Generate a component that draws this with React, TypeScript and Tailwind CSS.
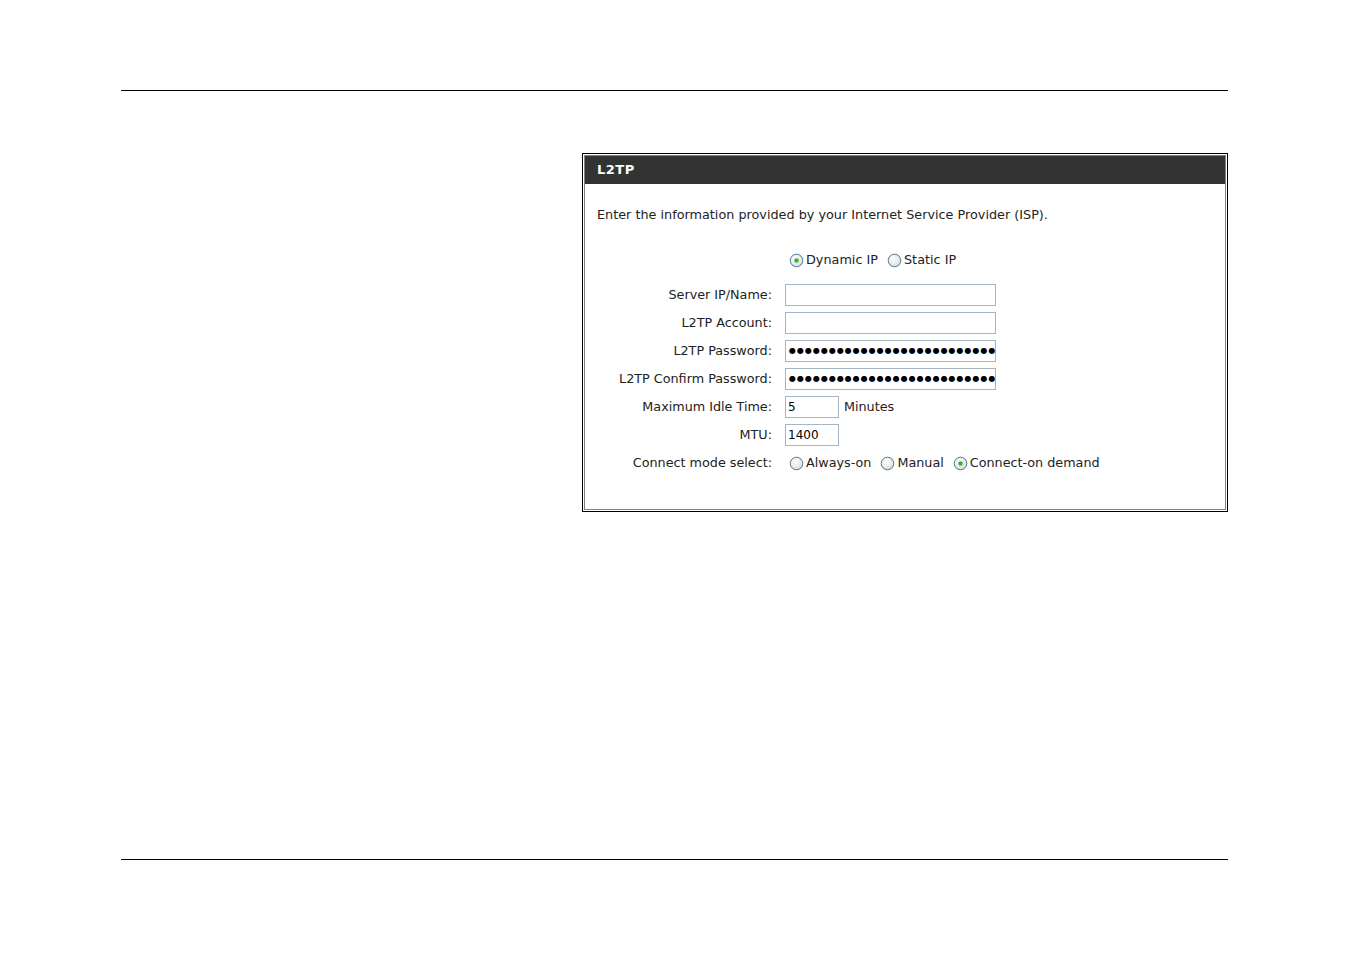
import React from 'react';

function Radio({ checked }: { checked?: boolean }) {
  return (
    <svg width="15" height="15" viewBox="0 0 15 15" className="shrink-0">
      <defs>
        <radialGradient id="rg" cx="40%" cy="35%" r="70%">
          <stop offset="0%" stopColor="#ffffff" />
          <stop offset="100%" stopColor="#dcdcd6" />
        </radialGradient>
      </defs>
      <circle cx="7.5" cy="7.5" r="6.3" fill="url(#rg)" stroke="#1c5180" strokeOpacity="0.75" strokeWidth="1" />
      {checked && <circle cx="7.5" cy="7.5" r="2.3" fill="#3db33d" />}
    </svg>
  );
}

const Opt = ({ checked, label }: { checked?: boolean; label: string }) => (
  <span className="inline-flex items-center gap-[2px]">
    <Radio checked={checked} />
    <span>{label}</span>
  </span>
);

const dots = '●'.repeat(26);

function Field({ kind, value }: { kind: 'text' | 'pwd' | 'small'; value?: string }) {
  if (kind === 'small') {
    return (
      <div className="w-[54px] h-[22px] border border-[#a5b5c6] bg-white px-[2px] flex items-center text-[12px] text-black">
        {value}
      </div>
    );
  }
  return (
    <div className="w-[211px] h-[22px] border border-[#a5b5c6] bg-white px-[3px] flex items-center overflow-hidden whitespace-nowrap">
      {kind === 'pwd' && <span className="text-[8px] tracking-[1px] text-black leading-none">{dots}</span>}
    </div>
  );
}

const rows: { label: string; field: React.ReactNode }[] = [
  { label: 'Server IP/Name:', field: <Field kind="text" /> },
  { label: 'L2TP Account:', field: <Field kind="text" /> },
  { label: 'L2TP Password:', field: <Field kind="pwd" /> },
  { label: 'L2TP Confirm Password:', field: <Field kind="pwd" /> },
  {
    label: 'Maximum Idle Time:',
    field: (
      <div className="flex items-center gap-[5px]">
        <Field kind="small" value="5" />
        <span>Minutes</span>
      </div>
    ),
  },
  { label: 'MTU:', field: <Field kind="small" value="1400" /> },
  {
    label: 'Connect mode select:',
    field: (
      <div className="flex items-center gap-[9px] pl-[4px]">
        <Opt label="Always-on" />
        <Opt label="Manual" />
        <Opt checked label="Connect-on demand" />
      </div>
    ),
  },
];

export default function App() {
  return (
    <div className="w-[1350px] h-[954px] bg-white relative" style={{ fontFamily: '"DejaVu Sans", Tahoma, sans-serif' }}>
      <div className="pt-[90px] px-[121px]">
        <div className="border-t border-black w-[1107px]" />
      </div>

      <div className="flex mt-[62px] pl-[582px]">
        <div className="w-[646px] border border-black p-px">
          <div className="border border-[#808080] h-[355px]">
            <div className="bg-[#333333] h-[28px] flex items-center pl-[12px]">
              <span className="text-white font-bold text-[13px] tracking-[0.5px]">L2TP</span>
            </div>
            <div className="text-[12.8px] text-[#222] pl-[12px] pt-[23px] leading-[16px]">
              Enter the information provided by your Internet Service Provider (ISP).
            </div>
            <div className="text-[12.8px] text-[#222] mt-[29px] pl-[204px] flex items-center gap-[9px] h-[16px]">
              <Opt checked label="Dynamic IP" />
              <Opt label="Static IP" />
            </div>
            <div className="mt-[16px] grid grid-cols-[187px_1fr] gap-x-[13px] gap-y-[6px] text-[12.75px] text-[#222]">
              {rows.map((r) => (
                <React.Fragment key={r.label}>
                  <div className="h-[22px] flex items-center justify-end">{r.label}</div>
                  <div className="h-[22px] flex items-center">{r.field}</div>
                </React.Fragment>
              ))}
            </div>
          </div>
        </div>
      </div>

      <div className="absolute left-[121px] top-[859px] w-[1107px] border-t border-black" />
    </div>
  );
}
